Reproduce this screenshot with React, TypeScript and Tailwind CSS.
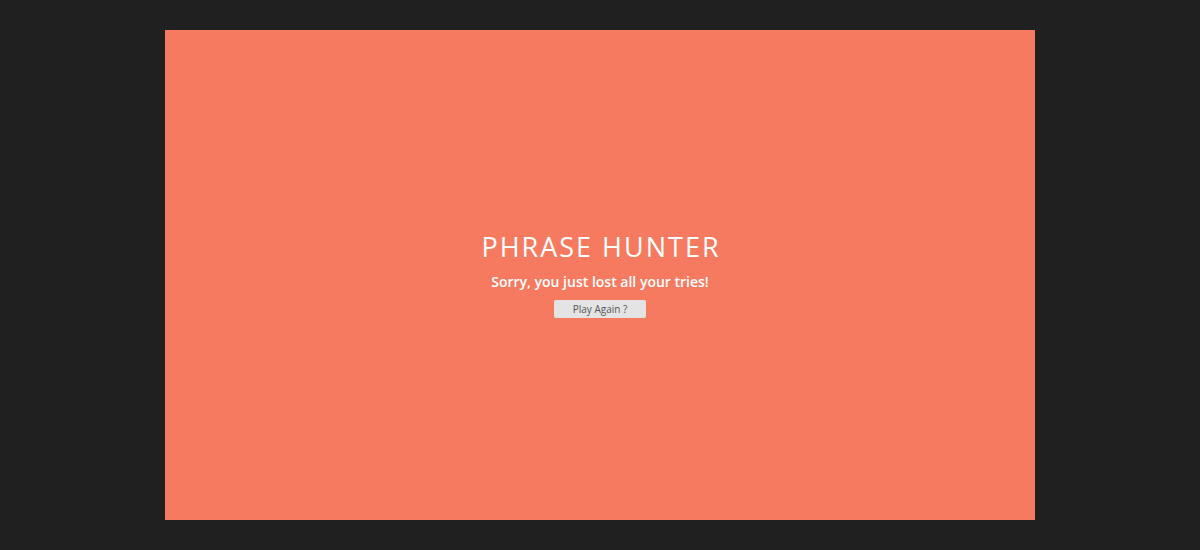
export default function App() {
  return (
    <div className="w-[1200px] h-[550px] bg-[#202020] flex items-start justify-center pt-[30px]" style={{ fontFamily: '"Open Sans", "Liberation Sans", sans-serif' }}>
      <div className="w-[870px] h-[490px] bg-[#f67a60] flex flex-col items-center justify-center text-white">
        <h1 className="text-[27px] leading-[30px] font-normal tracking-[2px] pl-[2px]">PHRASE HUNTER</h1>
        <p className="mt-[10px] text-[14px] leading-[20px] font-semibold">Sorry, you just lost all your tries!</p>
        <button className="mt-[8px] w-[92px] h-[18px] bg-[#e4e4e4] rounded-[2px] text-[10px] leading-[18px] text-[#555]">Play Again ?</button>
      </div>
    </div>
  );
}
